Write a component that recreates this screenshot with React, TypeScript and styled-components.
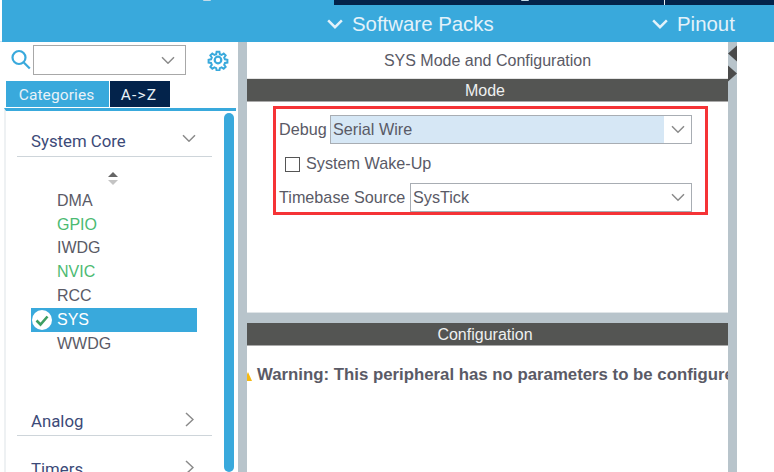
import React from "react";
import styled, { createGlobalStyle } from "styled-components";

const Global = createGlobalStyle`
  html, body { margin: 0; padding: 0; background: #fff; overflow: hidden; }
  #root { width: 774px; height: 472px; overflow: hidden; }
  * { box-sizing: border-box; }
`;

const Page = styled.div`
  width: 774px; height: 472px; display: flex; flex-direction: column;
  font-family: "Liberation Sans", Arial, sans-serif; color: #5a5a66; background: #fff; overflow: hidden;
`;
const TopBar = styled.header`
  height: 42px; margin-left: 2px; background: #39a9dc; position: relative; display: flex; flex-shrink: 0;
  flex-direction: column;
`;
const NavyStrip = styled.div`
  height: 5px; margin-left: 332px; display: flex; gap: 1px; background: #e6eef3; flex-shrink: 0;
`;
const NavyTab = styled.div<{ $w: number }>`
  width: ${(p) => p.$w}px; background: #03234b; flex-shrink: 0;
`;
const TopGlint = styled.span<{ $x: number }>`
  position: absolute; left: ${(p) => p.$x}px; top: 0; width: 8px; height: 1px; background: #c4dbe8; border-radius: 0 0 4px 4px;
`;
const MenuRow = styled.nav`
  flex: 1; display: flex; padding-left: 325px; align-items: center;
`;
const MenuItem = styled.div<{ $w: number }>`
  width: ${(p) => p.$w}px; display: flex; align-items: center; gap: 9px;
  font-size: 20.4px; color: #e3f2fa; padding-top: 1px;
`;
const Body = styled.div`
  flex: 1; display: flex; min-height: 0; border-top: 1px solid #cfe6f3; margin-top: -1px; padding-left: 2px;
`;
const Left = styled.aside`
  width: 236px; display: flex; flex-direction: column; flex-shrink: 0; background: #fff;
`;
const SearchRow = styled.div`
  height: 36px; display: flex; align-items: center; padding: 0 0 0 9px; flex-shrink: 0;
`;
const SearchIconWrap = styled.span`
  display: flex; margin-bottom: 2px;
`;
const SearchBox = styled.div`
  width: 153px; height: 30px; margin-left: 2px; border: 1.5px solid #a8a8a8; display: flex; align-items: center;
  justify-content: flex-end; padding-right: 10px;
`;
const GearWrap = styled.div`
  margin-left: 21px; display: flex; margin-bottom: 1px;
`;
const Tabs = styled.div`
  height: 26px; padding-left: 4px; display: flex; gap: 1px; flex-shrink: 0; margin-top: 3px;
`;
const Tab = styled.div<{ $active?: boolean }>`
  width: ${(p) => (p.$active ? 103 : 60)}px; background: ${(p) => (p.$active ? "#39a9dc" : "#03234b")};
  color: #e8f2f8; font-family: Roboto, sans-serif; font-size: 15.5px; letter-spacing: ${(p) => (p.$active ? 0.1 : 1.2)}px;
  display: flex; align-items: center; justify-content: center; padding: 1px 2px 0 0;
`;
const TreeFrame = styled.div`
  flex: 1; margin: 1px 2px 0 2px; border-top: 3px solid #39a9dc; border-left: 2px solid #eef1f3;
  display: flex; min-height: 0; position: relative;
`;
const Tree = styled.div`
  flex: 1; display: flex; flex-direction: column; padding: 0 12px 0 11px; min-width: 0;
`;
const Track = styled.div`
  width: 10px; margin: 2px 2px 0 0; background: #39a9dc; border-radius: 5px; flex-shrink: 0;
`;
const Group = styled.div<{ $open?: boolean }>`
  height: ${(p) => (p.$open ? 46 : 30)}px; flex-shrink: 0; border-bottom: 1.5px solid #ced5da;
  display: flex; align-items: flex-end; justify-content: space-between;
  font-family: Roboto, sans-serif; font-size: 16.8px; color: #3c4a78;
  padding: 0 16px ${(p) => (p.$open ? 6 : 5)}px 14px;
`;
const GroupText = styled.span`
  line-height: 18px;
`;
const GroupIcon = styled.span<{ $open?: boolean }>`
  display: flex; margin-bottom: ${(p) => (p.$open ? 8 : 3)}px; margin-right: ${(p) => (p.$open ? 0 : 2)}px;
`;
const Sort = styled.div`
  height: 32px; display: flex; justify-content: center; align-items: flex-end; padding: 0 3px 4px 0; flex-shrink: 0;
`;
const List = styled.div`
  display: flex; flex-direction: column; flex-shrink: 0; margin-left: 14px; width: 166px;
`;
const Item = styled.div<{ $green?: boolean; $sel?: boolean }>`
  height: 23.8px; display: flex; align-items: center; font-size: 16px;
  color: ${(p) => (p.$sel ? "#fff" : p.$green ? "#4cba72" : "#5a5a66")};
  background: ${(p) => (p.$sel ? "#39a9dc" : "transparent")};
  padding-left: ${(p) => (p.$sel ? 1 : 26)}px; gap: 5px;
`;
const Spacer = styled.div<{ $h: number }>`
  height: ${(p) => p.$h}px; flex-shrink: 0;
`;
const Gutter = styled.div`
  width: 9px; background: #b8c4cb; flex-shrink: 0;
`;
const RightGutter = styled(Gutter)`
  display: flex; flex-direction: column; align-items: center; padding-top: 3px; gap: 3px; position: relative;
`;
const Center = styled.main`
  width: 481px; display: flex; flex-direction: column; flex-shrink: 0; background: #b8c4cb;
`;
const Title = styled.div`
  height: 37px; background: #fff; display: flex; align-items: center; justify-content: center;
  font-size: 16px; color: #5a5a66; flex-shrink: 0; padding-top: 1px; border-bottom: 1px solid #e4e4e4;
`;
const Bar = styled.div`
  height: 23px; background: #545553; color: #eef0f0; flex-shrink: 0; font-size: 16px;
  display: flex; align-items: center; justify-content: center; padding: 1px 5px 0 0; border-bottom: 1px solid #aaa;
`;
const ModePanel = styled.section`
  height: 211px; background: #fff; flex-shrink: 0; padding: 4px 0 0 26px; border-bottom: 1px solid #e0e5e8;
`;
const RedBox = styled.div`
  width: 435px; height: 109px; border: 3px solid #f53336; padding: 6px 13px 0 3px;
  display: flex; flex-direction: column;
`;
const Row = styled.div`
  display: flex; align-items: center; font-size: 16.2px; color: #5a5a66;
`;
const Sel = styled.div<{ $w: number }>`
  width: ${(p) => p.$w}px; height: 29px; border: 1.5px solid #a8adb3; display: flex; align-items: center;
  justify-content: space-between; margin-left: auto; background: #fff; flex-shrink: 0;
`;
const SelText = styled.div<{ $hl?: boolean }>`
  flex: 1; height: 100%; display: flex; align-items: center; padding-left: 2px;
  background: ${(p) => (p.$hl ? "#d6e7f5" : "transparent")};
`;
const SelArrow = styled.div`
  width: 27px; display: flex; justify-content: center; flex-shrink: 0;
`;
const CheckRow = styled(Row)`
  height: 40px; padding: 0 0 0 6px; gap: 6px;
`;
const Box = styled.span`
  width: 15px; height: 15px; border: 1.5px solid #555; display: block; flex-shrink: 0; margin-top: 1px;
`;
const ConfigPanel = styled.section`
  flex: 1; background: #fff; position: relative; overflow: hidden; white-space: nowrap;
  padding: 19px 0 0 10px; font-size: 16.8px; font-weight: bold; color: #5a5a66; line-height: 20px;
`;
const WarnIcon = styled.svg`
  position: absolute; left: -3px; top: 26px;
`;
const RightBlank = styled.div`
  flex: 1; background: #fff;
`;

const Chevron = ({ w = 14, color = "#8a8a8a", sw = 1.5 }: { w?: number; color?: string; sw?: number }) => (
  <svg width={w} height={w * 0.6} viewBox="0 0 14 8" fill="none" stroke={color} strokeWidth={sw}>
    <path d="M1 1l6 6 6-6" />
  </svg>
);
const ChevronRight = () => (
  <svg width="9" height="15" viewBox="0 0 9 15" fill="none" stroke="#8a8a8a" strokeWidth="1.5">
    <path d="M1 1l7 6.5L1 14" />
  </svg>
);
const Search = () => (
  <svg width="20" height="21" viewBox="0 0 20 21" fill="none" stroke="#39a9dc" strokeWidth="2.2">
    <circle cx="8" cy="8.5" r="6.5" />
    <path d="M12.8 13.5l6 6" />
  </svg>
);
const Gear = () => (
  <svg width="22" height="22" viewBox="0 0 24 24" fill="none" stroke="#39a9dc" strokeWidth="2.4">
    <circle cx="12" cy="12" r="3.6" />
    <path d="M10.3 2h3.4l.5 3 2.2.9 2.5-1.8 2.4 2.4-1.8 2.5.9 2.2 3 .5v3.4l-3 .5-.9 2.2 1.8 2.5-2.4 2.4-2.5-1.8-2.2.9-.5 3h-3.4l-.5-3-2.2-.9-2.5 1.8-2.4-2.4 1.8-2.5-.9-2.2-3-.5v-3.4l3-.5.9-2.2-1.8-2.5 2.4-2.4 2.5 1.8 2.2-.9z" transform="translate(1.2 1.2) scale(.9)" />
  </svg>
);
const SortIcon = () => (
  <svg width="10" height="13" viewBox="0 0 10 13">
    <path d="M5 0l5 5H0z" fill="#666" />
    <path d="M0 8h10l-5 5z" fill="#c4c4c4" />
  </svg>
);
const CheckBadge = () => (
  <svg width="20" height="20" viewBox="0 0 20 20">
    <circle cx="10" cy="10" r="10" fill="#fff" />
    <path d="M4.5 10.5l4 4 7-8" fill="none" stroke="#3d9e62" strokeWidth="2.6" />
  </svg>
);

export default function App() {
  return (
    <Page>
      <Global />
      <TopBar>
        <TopGlint $x={201} />
        <TopGlint $x={519} />
        <NavyStrip>
          <NavyTab $w={330} />
          <NavyTab $w={110} />
        </NavyStrip>
        <MenuRow>
          <MenuItem $w={325}>
            <Chevron w={16} color="#e3f2fa" sw={2.2} />
            Software Packs
          </MenuItem>
          <MenuItem $w={120}>
            <Chevron w={16} color="#e3f2fa" sw={2.2} />
            Pinout
          </MenuItem>
        </MenuRow>
      </TopBar>
      <Body>
        <Left>
          <SearchRow>
            <SearchIconWrap>
              <Search />
            </SearchIconWrap>
            <SearchBox>
              <Chevron />
            </SearchBox>
            <GearWrap>
              <Gear />
            </GearWrap>
          </SearchRow>
          <Tabs>
            <Tab $active>Categories</Tab>
            <Tab>A-&gt;Z</Tab>
          </Tabs>
          <TreeFrame>
            <Tree>
              <Group $open>
                <GroupText>System Core</GroupText>
                <GroupIcon $open>
                  <Chevron />
                </GroupIcon>
              </Group>
              <Sort>
                <SortIcon />
              </Sort>
              <List>
                <Item>DMA</Item>
                <Item $green>GPIO</Item>
                <Item>IWDG</Item>
                <Item $green>NVIC</Item>
                <Item>RCC</Item>
                <Item $sel>
                  <CheckBadge />
                  SYS
                </Item>
                <Item>WWDG</Item>
              </List>
              <Spacer $h={50} />
              <Group>
                <GroupText>Analog</GroupText>
                <GroupIcon>
                  <ChevronRight />
                </GroupIcon>
              </Group>
              <Spacer $h={18} />
              <Group>
                <GroupText>Timers</GroupText>
                <GroupIcon>
                  <ChevronRight />
                </GroupIcon>
              </Group>
            </Tree>
            <Track />
          </TreeFrame>
        </Left>
        <Gutter />
        <Center>
          <Title>SYS Mode and Configuration</Title>
          <Bar>Mode</Bar>
          <ModePanel>
            <RedBox>
              <Row>
                Debug
                <Sel $w={362}>
                  <SelText $hl>Serial Wire</SelText>
                  <SelArrow>
                    <Chevron />
                  </SelArrow>
                </Sel>
              </Row>
              <CheckRow>
                <Box />
                System Wake-Up
              </CheckRow>
              <Row>
                Timebase Source
                <Sel $w={282}>
                  <SelText>SysTick</SelText>
                  <SelArrow>
                    <Chevron />
                  </SelArrow>
                </Sel>
              </Row>
            </RedBox>
          </ModePanel>
          <Spacer $h={10} />
          <Bar>Configuration</Bar>
          <ConfigPanel>
            <WarnIcon width="8" height="9" viewBox="0 0 8 9">
              <path d="M4 0l4 9H0z" fill="#f5b914" />
            </WarnIcon>
            Warning: This peripheral has no parameters to be configured
          </ConfigPanel>
        </Center>
        <RightGutter>
          <svg width="9" height="17" viewBox="0 0 9 16">
            <path d="M9 0v16L0 8z" fill="#4a4a4a" />
          </svg>
          <svg width="9" height="17" viewBox="0 0 9 16">
            <path d="M0 0v16l9-8z" fill="#4a4a4a" />
          </svg>
        </RightGutter>
        <RightBlank />
      </Body>
    </Page>
  );
}
